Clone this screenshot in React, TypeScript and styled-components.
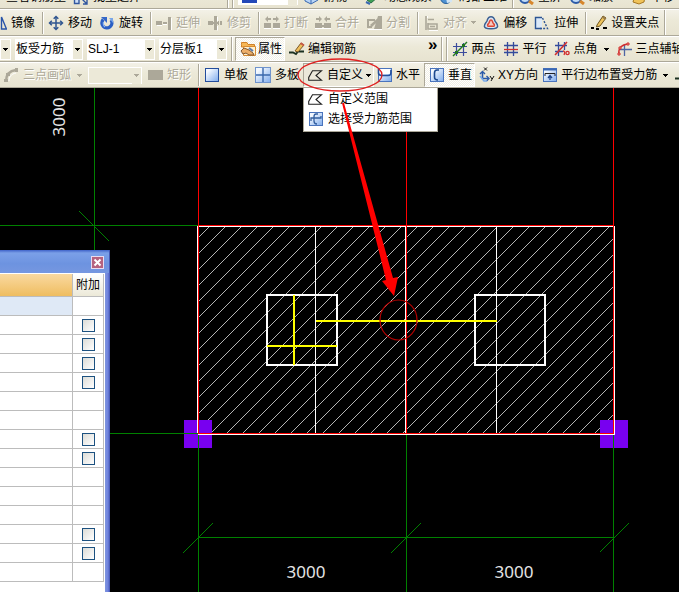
import React from "react";
import styled, { createGlobalStyle, css } from "styled-components";

const GlobalStyle = createGlobalStyle`
  *, *::before, *::after { box-sizing: border-box; }
  body {
    margin: 0;
    background: #000;
    color: #000;
    font-family: "Liberation Sans", "Noto Sans CJK SC", sans-serif;
    font-size: 12px;
    line-height: 16px;
  }
  button, select, input {
    font: inherit;
    color: inherit;
    margin: 0;
  }
`;

const Window = styled.main`
  position: relative;
  display: flex;
  flex-direction: column;
  min-height: 100vh;
  overflow: hidden;
`;

const ToolRow = styled.div<{ $height: number; $start?: number; $clipped?: boolean }>`
  display: flex;
  flex: none;
  align-items: center;
  height: ${(p) => p.$height}px;
  margin-top: ${(p) => (p.$clipped ? -16 : 0)}px;
  padding-left: ${(p) => p.$start ?? 0}px;
  white-space: nowrap;
  background: linear-gradient(#f3f1e7, #ece9d8 40%, #e7e3d0);
  border-top: 1px solid #fff;
  border-bottom: 1px solid #aca899;
  & > * { flex: none; }
`;

const Tool = styled.button<{ $gap?: number; $after?: number; $look?: "pressed" | "open" }>`
  display: flex;
  align-items: center;
  gap: ${(p) => p.$gap ?? 4}px;
  margin-right: ${(p) => p.$after ?? 7}px;
  padding: 0;
  border: 0;
  background: none;
  white-space: nowrap;
  &:disabled {
    color: #aca899;
    text-shadow: 1px 1px 0 #fff;
  }
  ${(p) =>
    p.$look &&
    css`
      height: 24px;
      padding: 0 2px 0 4px;
      border: 1px solid;
      border-color: #aca899 #fff #fff #aca899;
      background: ${p.$look === "pressed"
        ? "repeating-conic-gradient(#fff 0 25%, #f1efe5 0 50%) 0 0 / 2px 2px"
        : "#ebe8da"};
    `}
`;

const Label = styled.span``;

const CaretBox = styled.span<{ $left: number }>`
  display: flex;
  margin-left: ${(p) => p.$left}px;
`;

const MirrorClip = styled.div`
  display: flex;
  justify-content: flex-end;
  width: 42px;
`;

const Sep = styled.span`
  width: 2px;
  height: 22px;
  margin-right: 4px;
  border-left: 1px solid #aca899;
  border-right: 1px solid #fff;
`;

const BarEnd = styled.span<{ $after: number }>`
  width: 2px;
  align-self: stretch;
  margin-right: ${(p) => p.$after}px;
  border-left: 1px solid #aca899;
  border-right: 1px solid #fff;
`;

const Overflow = styled.button`
  margin: 0 3px 8px 72px;
  padding: 0;
  border: 0;
  background: none;
  font-size: 17px;
  line-height: 16px;
  font-weight: bold;
`;

const ComboBox = styled.label<{ $width: number; $height?: number; $after?: number; $off?: boolean }>`
  display: grid;
  grid-template-columns: 1fr 9px;
  align-items: center;
  width: ${(p) => p.$width}px;
  height: ${(p) => p.$height ?? 21}px;
  margin-right: ${(p) => p.$after ?? 4}px;
  background: ${(p) => (p.$off ? "#ece9d8" : "#fff")};
  border: 1px solid #fff;
  & > select {
    grid-area: 1 / 1 / 2 / 3;
    width: 100%;
    height: 100%;
    padding: 0;
    border: 0;
    appearance: none;
    background: none;
  }
`;

const ComboArrow = styled.span<{ $off?: boolean }>`
  grid-area: 1 / 2;
  display: flex;
  align-items: center;
  justify-content: center;
  height: 100%;
  background: #ece9d8;
  color: ${(p) => (p.$off ? "#aca899" : "#000")};
  pointer-events: none;
`;

const Swatch = styled.span`
  grid-area: 1 / 1;
  width: 15px;
  height: 10px;
  margin-left: 3px;
  background: #2348b8;
  pointer-events: none;
`;

const MenuAnchor = styled.div`
  position: relative;
  margin-right: 3px;
`;

const Menu = styled.div`
  position: absolute;
  z-index: 3;
  top: 100%;
  left: 0;
  width: 135px;
  padding: 1px 0 2px;
  background: #fff;
  border: 1px solid #aca899;
`;

const MenuItem = styled.button`
  display: flex;
  align-items: center;
  gap: 4px;
  width: 100%;
  height: 20px;
  padding: 0 4px;
  border: 0;
  background: none;
  white-space: nowrap;
`;

const Canvas = styled.section`
  position: relative;
  flex: 1;
  min-height: 504px;
  background: #000;
`;

const Drawing = styled.svg`
  display: block;
  font-family: "Noto Sans", sans-serif;
  font-size: 17px;
`;

const Annotation = styled.svg`
  position: absolute;
  z-index: 4;
  top: 0;
  left: 0;
  pointer-events: none;
`;

const Panel = styled.aside`
  position: absolute;
  top: 162px;
  left: 0;
  bottom: 0;
  display: flex;
  flex-direction: column;
  width: 110px;
  padding-right: 5px;
  overflow: hidden;
  background: linear-gradient(90deg, #7f98dc calc(100% - 5px), #7a8fe0 calc(100% - 4px), #6f82dc calc(100% - 2px), #3d4fae);
`;

const TitleBar = styled.header`
  display: flex;
  align-items: center;
  justify-content: flex-end;
  flex: none;
  height: 23px;
  margin-right: -5px;
  padding: 1px 5px 0 0;
  background: linear-gradient(#3f62c8, #7ba0e8 3px, #6d93e0 60%, #7697e0);
  border-right: 1px solid #4458b4;
`;

const Close = styled.button`
  display: flex;
  align-items: center;
  justify-content: center;
  width: 13px;
  height: 13px;
  padding: 0;
  border: 1px solid #e8dcf0;
  background: #b5627f;
`;

const PanelBody = styled.div`
  flex: 1;
  background: #fff;
  border-top: 1px solid #fff;
`;

const Grid = styled.table`
  width: 104px;
  border-collapse: separate;
  border-spacing: 0;
  table-layout: fixed;
`;

const Cell = styled.td<{ $tint?: boolean }>`
  height: 19px;
  padding: 0;
  border: solid #bcbcbc;
  border-width: 0 1px 1px 0;
  background: ${(p) => (p.$tint ? "#dfe9f6" : "#fff")};
  text-align: center;
  line-height: 0;
`;

const Head = styled.th<{ $width?: number; $gold?: boolean }>`
  width: ${(p) => (p.$width ? `${p.$width}px` : "auto")};
  height: 23px;
  padding: 0;
  border: solid #bcbcbc;
  border-width: 0 1px 1px 0;
  background: ${(p) => (p.$gold ? "linear-gradient(#fad9a0, #efbd60)" : "linear-gradient(#fff, #ece9d8)")};
  font-weight: normal;
`;

const Check = styled.input`
  appearance: none;
  width: 13px;
  height: 13px;
  border: 1px solid #1c5180;
  background: linear-gradient(135deg, #dcdcd7, #fff);
  vertical-align: middle;
  &:checked { background: #21a121; }
`;

function Caret() {
  return (
    <svg width="5" height="3" viewBox="0 0 5 3" shapeRendering="crispEdges" aria-hidden="true">
      <path d="M0 0H5L2.5 3Z" fill="currentColor" />
    </svg>
  );
}

const tile = <rect x="1.5" y="1.5" width="13" height="13" fill="url(#tileBlue)" stroke="#4a74bd" />;

const icons: Record<string, React.ReactNode> = {
  mirror: (
    <g fill="none" stroke="#2854a8">
      <path d="M1 14L6 2V14Z" fill="#6f9be0" />
      <path d="M8.5 1V15" stroke="#7a93c0" />
      <path d="M10.5 2V14H15.5Z" strokeWidth="1.4" />
    </g>
  ),
  move: (
    <g stroke="#2f5590" strokeWidth="1.5" fill="none">
      <path d="M8 2V14M2 8H14" />
      <path d="M5.7 3.8L8 1.5L10.3 3.8M5.7 12.2L8 14.5L10.3 12.2M3.8 5.7L1.5 8L3.8 10.3M12.2 5.7L14.5 8L12.2 10.3" />
    </g>
  ),
  rotate: (
    <g>
      <path d="M4.2 4.5A5 5 0 1 0 12 5" fill="none" stroke="#2a5fc4" strokeWidth="3.4" />
      <path d="M4.5 7A4.8 4.8 0 0 0 6 12" fill="none" stroke="#8db6f2" strokeWidth="1.2" />
      <path d="M2 2H8V8Z" fill="#3568c8" />
      <path d="M10 3L14 3L14 8Z" fill="#78a5e8" />
    </g>
  ),
  extend: (
    <g fill="#aca899">
      <path d="M0 6H6V10H0ZM7 7H11V9H7ZM12 2H15V15H12Z" />
      <path d="M1 10.5H6M7 9.5H11M15.5 3V15" stroke="#fff" />
    </g>
  ),
  trim: (
    <g fill="#aca899">
      <path d="M1 6H6V10H1ZM6 7H11V9H6ZM7 1H10V15H7ZM11 6H12V10H11ZM13 6H15V10H13Z" />
      <path d="M10.5 2V6M10.5 11V15.5" stroke="#fff" fill="none" />
    </g>
  ),
  breakAt: (
    <g fill="#aca899">
      <path d="M1 4L4 1V3H7V5H4V7ZM15 4L12 1V3H9V5H12V7ZM0 8H7V13H0ZM9 8H16V13H9Z" />
      <path d="M0 13.5H7M9 13.5H16" stroke="#fff" />
    </g>
  ),
  join: (
    <g fill="#aca899">
      <path d="M7 4L4 1V3H1V5H4V7ZM9 4L12 1V3H15V5H12V7ZM0 8H7V13H0ZM9 8H16V13H9ZM7 10H9V12H7Z" />
      <path d="M0 13.5H16" stroke="#fff" />
    </g>
  ),
  split: (
    <g fill="#aca899">
      <path d="M1 4H9V6H3V11H6V13H1ZM8 14L12 1H16V14ZM4 10L13 2L14 4L6 12Z" />
      <path d="M2 14.5H16" stroke="#fff" />
    </g>
  ),
  align: (
    <g fill="none" stroke="#aca899" strokeWidth="1.6">
      <path d="M3 1V15M5 4.5H11M5 8V14H14V9H5M7 11.5H12" />
      <path d="M4.5 1V3M6 15.5H15" stroke="#fff" strokeWidth="1" />
    </g>
  ),
  offset: (
    <g fill="none">
      <path d="M8 1.8C11 1.8 11.4 4 12 6C13 8 15 9 14.6 11.4C14.2 14 11.5 13.8 8 13.8S1.8 14 1.4 11.4C1 9 3 8 4 6C4.6 4 5 1.8 8 1.8Z" fill="#dce7f3" stroke="#3b5f92" strokeWidth="1.5" />
      <path d="M8 5C9.5 5 9.4 7 10.2 8.2C11 9.2 11.8 9.5 11.4 10.6C11 11.6 9.5 11.3 8 11.3S5 11.6 4.6 10.6C4.2 9.5 5 9.2 5.8 8.2C6.6 7 6.5 5 8 5Z" fill="#f7c8c0" stroke="#dc4634" strokeWidth="1.5" />
    </g>
  ),
  stretch: (
    <g fill="none" stroke="#2c5594">
      <path d="M8 2.5H1.5V13.5H8" fill="#dbe9f8" strokeWidth="1.4" />
      <path d="M8.5 3L13.5 13.5H6" strokeDasharray="2 1.5" strokeWidth="1.4" />
    </g>
  ),
  grip: (
    <g>
      <path d="M0 12H3V14H0ZM5 13H8V15H5ZM12 12H16V14H12Z" />
      <path d="M6 10L12 1L15 3L9 11L5.5 12Z" fill="#efc45c" stroke="#6c5420" />
      <path d="M11.5 2L14.5 4" stroke="#9a7d4c" strokeWidth="2" />
    </g>
  ),
  property: (
    <g>
      <path d="M1.5 3.5V1.5H7L8 3.5H14.5V6H1.5Z" fill="#f6b756" stroke="#cf812a" />
      <path d="M3.5 5.5H15.5V14.5H3.5Z" fill="#fff0cf" stroke="#d78b30" />
      <path d="M1 10L4 7L9 9L13 12L14 14H9L6 12L3 13Z" fill="#edae68" stroke="#80572e" />
      <path d="M9 7L13 10" stroke="#5d7dad" strokeWidth="2" />
    </g>
  ),
  editBar: (
    <g fill="none">
      <path d="M0 11.5H4L7 13L9 10.5H15" stroke="#1b3021" strokeWidth="1.8" />
      <path d="M6 10L12 2L15 4L9 11Z" fill="#f0c05c" stroke="#7a5727" />
      <path d="M11.5 2L15 4.5" stroke="#c85b48" strokeWidth="2" />
    </g>
  ),
  twoPoint: (
    <g fill="none">
      <path d="M4.5 2V15M11.5 2V15M1 5.5H15M1 11.5H15" stroke="#3b4b9c" strokeWidth="1.2" />
      <path d="M1 15L15 1" stroke="#247a24" strokeWidth="1.4" />
      <path d="M3 10H6V13H3ZM10 3H13V6H10Z" fill="#207420" />
    </g>
  ),
  parallel: (
    <g fill="none" strokeWidth="1.3">
      <path d="M4.5 1V15M10.5 1V15" stroke="#344b9c" />
      <path d="M1 4.5H15M1 11.5H15" stroke="#344b9c" />
      <path d="M1 8.5H15" stroke="#d22e2e" />
    </g>
  ),
  pointAngle: (
    <g fill="none">
      <path d="M4.5 1V15M10.5 1V9M1 4.5H13M1 10.5H9" stroke="#344b9c" strokeWidth="1.3" />
      <path d="M1 14L13 1" stroke="#d22e2e" strokeWidth="1.5" />
      <path d="M9 10C11 10 11 12 10 14" stroke="#d22e2e" strokeWidth="1.3" />
      <circle cx="13.5" cy="12" r="1.6" stroke="#d22e2e" strokeWidth="1.4" />
    </g>
  ),
  threeAxis: (
    <g fill="none">
      <path d="M8.5 3V15M4 8.5H16" stroke="#4d65a4" strokeWidth="1.3" />
      <path d="M3 13C2 7 6 3 13 3" stroke="#d22e2e" strokeWidth="1.5" />
      <path d="M2 12H4V14H2ZM3 6H5V8H3ZM11 2H13V4H11Z" fill="#f4b5a8" stroke="#d22e2e" />
    </g>
  ),
  arc: (
    <g fill="none" stroke="#aca899">
      <path d="M3 14C3 8 6 4 13 3" strokeWidth="2.4" />
      <path d="M1 12H5V15H1ZM3 6H7V9H3ZM12 1H15V5H12Z" fill="#aca899" stroke="none" />
      <path d="M6 14C6 10 8 7 13 6" stroke="#fff" />
    </g>
  ),
  rect: <path d="M0 3H15V13H0Z" fill="#aca899" />,
  single: <rect x="1.5" y="1.5" width="13" height="13" fill="url(#tileBlue)" stroke="#234d9c" />,
  multi: (
    <g>
      <rect x="0.5" y="0.5" width="15" height="15" fill="url(#tileBlue)" stroke="#6f93cc" />
      <path d="M8 1V15M1 8H15" stroke="#3a68ac" strokeWidth="1.4" />
    </g>
  ),
  polygon: <path d="M0.7 13.3V10.5L4.5 3.7H13.5L8 8.5L13.5 13.3Z" fill="none" stroke="#202020" strokeWidth="1.1" />,
  horizontal: (
    <g fill="none">
      {tile}
      <path d="M2 2H13V7H2Z" fill="#fff" />
      <path d="M1.5 2V6C1.500 8.5 3 8.5 5 8.500H11C13.5 8.500 14 8 14 3" stroke="#25509c" strokeWidth="1.6" />
    </g>
  ),
  vertical: (
    <g fill="none">
      {tile}
      <path d="M10 3H8C6 3 5.5 4 5.5 6V10C5.5 12 6 13 9 13" stroke="#1b488e" strokeWidth="1.6" />
    </g>
  ),
  xy: (
    <g fill="none">
      <path d="M3.5 5V11.5H9" stroke="#2858a8" strokeWidth="1.6" />
      <path d="M1 7L3.5 4.5L6 7M7.5 9L10 11.5L7.5 14" stroke="#2858a8" strokeWidth="1.4" />
      <path d="M5 0.5L8 3.5M8 0.5L5 3.5M11 9L13 12M15 9L12 14" stroke="#111" />
      <path d="M1 9L5 14L8 14" stroke="#78a9e8" strokeWidth="1.6" />
    </g>
  ),
  edges: (
    <g fill="none">
      {tile}
      <path d="M1 2.5H15" stroke="#3a68b4" strokeWidth="2" />
      <path d="M3 9V6.500H13V9" stroke="#222" />
      <path d="M8 13V9M6 11L8 8.5L10 11" stroke="#1d438a" strokeWidth="1.3" />
    </g>
  ),
  pick: (
    <g fill="none">
      {tile}
      <path d="M10 3H8C6.5 3 6 4 6 6V10C6 12 7 13 9 13M3 10V7H13V5" stroke="#335f9f" strokeWidth="1.3" />
    </g>
  ),
  batch: (
    <g fill="none" stroke="#3157a0" strokeWidth="1.4">
      <path d="M1.5 2V14.5H6V2ZM8 2H14V8H8" fill="#cfe0f8" />
      <path d="M9 10L14 15M14 11V15H10" />
    </g>
  ),
  cube: (
    <g stroke="#3868b0">
      <path d="M2 5L9 2L15 5V11L8 15L2 12Z" fill="#b9d5f7" />
      <path d="M2 5L8 8L15 5M8 8V15" fill="none" />
    </g>
  ),
  orbit: (
    <g>
      <path d="M3 11L12 5L14 8L7 14Z" fill="#3ea055" stroke="#276c42" />
      <path d="M2 13L6 15" stroke="#3868b0" strokeWidth="2" />
    </g>
  ),
  globe: (
    <g>
      <circle cx="7" cy="9" r="5.5" fill="#4e91d2" stroke="#28609c" />
      <path d="M7 9L13 7V13L8 14Z" fill="#d2e5f5" />
    </g>
  ),
  lens: (
    <g fill="none">
      <circle cx="7" cy="9" r="5" fill="#c2dcf8" stroke="#2b5aa8" strokeWidth="1.8" />
      <path d="M11 12L15 15" stroke="#d7862c" strokeWidth="3" />
    </g>
  ),
  hand: <path d="M2 13L4 6L8 8L12 4L14 7L13 13L8 15Z" fill="#f0c35a" stroke="#a77722" />,
};

function Icon({ name }: { name: string }) {
  return (
    <svg width="16" height="16" viewBox="0 0 16 16" aria-hidden="true">
      {icons[name]}
    </svg>
  );
}

interface ToolButtonProps {
  icon: string;
  text: string;
  off?: boolean;
  gap?: number;
  after?: number;
  look?: "pressed" | "open";
  caret?: number;
}

function ToolButton({ icon, text, off, gap, after, look, caret }: ToolButtonProps) {
  return (
    <Tool type="button" disabled={off} $gap={gap} $after={after} $look={look}>
      <Icon name={icon} />
      <Label>{text}</Label>
      {caret !== undefined && (
        <CaretBox $left={caret}>
          <Caret />
        </CaretBox>
      )}
    </Tool>
  );
}

interface ComboProps {
  label: string;
  value?: string;
  width: number;
  height?: number;
  after?: number;
  off?: boolean;
  swatch?: boolean;
}

function Combo({ label, value, width, height, after, off, swatch }: ComboProps) {
  return (
    <ComboBox $width={width} $height={height} $after={after} $off={off}>
      <select aria-label={label} disabled={off}>
        <option>{value ?? ""}</option>
      </select>
      {swatch && <Swatch />}
      <ComboArrow $off={off}>
        <Caret />
      </ComboArrow>
    </ComboBox>
  );
}

const hatchSums = Array.from({ length: 39 }, (_, i) => 436 + i * 16);
const rowHasCheck = [false, true, true, true, true, false, false, true, true, false, false, false, true, true, false];

function PlanDrawing() {
  return (
    <Drawing width="679" height="504" viewBox="0 88 679 504" role="img" aria-label="板受力筋平面图">
      <defs>
        <clipPath id="slab">
          <rect x="199" y="227" width="414" height="206" />
        </clipPath>
      </defs>
      <g shapeRendering="crispEdges" fill="none">
        <g clipPath="url(#slab)" stroke="#b4b4b4">
          {hatchSums.map((s) => (
            <path key={s} d={`M${s - 434} 434L${s - 226} 226`} />
          ))}
        </g>
        <g fill="#7800f0">
          <rect x="184" y="420" width="28" height="28" />
          <rect x="600" y="420" width="28" height="28" />
        </g>
        <g stroke="#008000">
          <path d="M94.5 88V250M0 225.5H198M0 433.5H198M198.5 434V592M406.5 434V592M613.5 434V592M198 537.5H613" />
          <path d="M79 211L109 241M183 553L213 523M391 553L421 523M600 552L629 523" />
        </g>
        <path d="M197.5 226V433M198 226.5H615M198 434.5H615M405.5 226V433M614.5 226V434M315.5 226V433M496.5 226V433" stroke="#fff" />
        <path d="M198.5 88V434M406.5 88V434M613.5 88V434M198 225.5H614M198 433.5H614" stroke="#f00" />
        <g stroke="#fff" strokeWidth="2">
          <rect x="267" y="295" width="70" height="70" />
          <rect x="475" y="295" width="70" height="70" />
        </g>
        <path d="M294 295V365M267 346H337M316 321H497" stroke="#ff0" strokeWidth="2" />
      </g>
      <g fill="#e4e4e4" textAnchor="middle">
        <text x="306" y="578">3000</text>
        <text x="514" y="578">3000</text>
        <text transform="translate(65 117) rotate(-90)">3000</text>
      </g>
    </Drawing>
  );
}

function AddonPanel() {
  return (
    <Panel>
      <TitleBar>
        <Close type="button" aria-label="关闭">
          <svg width="9" height="9" viewBox="0 0 9 9" aria-hidden="true">
            <path d="M1.5 1.5L7.5 7.5M7.5 1.5L1.5 7.5" stroke="#fff" strokeWidth="2" />
          </svg>
        </Close>
      </TitleBar>
      <PanelBody>
        <Grid>
          <thead>
            <tr>
              <Head $gold aria-label="属性值" />
              <Head $width={31}>附加</Head>
            </tr>
          </thead>
          <tbody>
            {rowHasCheck.map((has, i) => (
              <tr key={i}>
                <Cell $tint={i === 0} />
                <Cell>{has && <Check type="checkbox" aria-label="附加" />}</Cell>
              </tr>
            ))}
          </tbody>
        </Grid>
      </PanelBody>
    </Panel>
  );
}

export default function App() {
  return (
    <Window>
      <GlobalStyle />
      <ToolRow $height={25} $start={6} $clipped>
        <Tool type="button"><Label>查看钢筋量</Label></Tool>
        <ToolButton icon="batch" text="批量选择" after={86} />
        <BarEnd $after={3} />
        <BarEnd $after={4} />
        <Combo label="楼层" width={60} height={16} after={5} swatch />
        <ToolButton icon="cube" text="俯视" after={17} />
        <ToolButton icon="orbit" text="动态观察" />
        <ToolButton icon="globe" text="局部三维" after={5} />
        <Sep />
        <ToolButton icon="lens" text="全屏" />
        <ToolButton icon="lens" text="缩放" after={18} />
        <ToolButton icon="hand" text="平移" />
      </ToolRow>
      <ToolRow $height={27}>
        <MirrorClip>
          <ToolButton icon="mirror" text="镜像" />
        </MirrorClip>
        <Sep />
        <ToolButton icon="move" text="移动" />
        <ToolButton icon="rotate" text="旋转" />
        <Sep />
        <ToolButton icon="extend" text="延伸" off />
        <ToolButton icon="trim" text="修剪" off />
        <Sep />
        <ToolButton icon="breakAt" text="打断" off />
        <ToolButton icon="join" text="合并" off />
        <ToolButton icon="split" text="分割" off />
        <Sep />
        <ToolButton icon="align" text="对齐" off caret={0} />
        <ToolButton icon="offset" text="偏移" />
        <ToolButton icon="stretch" text="拉伸" />
        <Sep />
        <ToolButton icon="grip" text="设置夹点" after={5} />
        <BarEnd $after={0} />
      </ToolRow>
      <ToolRow $height={26}>
        <Combo label="类别" width={11} />
        <Combo label="构件类型" value="板受力筋" width={68} />
        <Combo label="构件" value="SLJ-1" width={68} />
        <Combo label="分层" value="分层板1" width={68} />
        <BarEnd $after={2} />
        <ToolButton icon="property" text="属性" look="pressed" gap={2} after={4} />
        <ToolButton icon="editBar" text="编辑钢筋" gap={3} after={0} />
        <Overflow type="button" aria-label="更多">»</Overflow>
        <BarEnd $after={3} />
        <BarEnd $after={4} />
        <ToolButton icon="twoPoint" text="两点" />
        <ToolButton icon="parallel" text="平行" />
        <ToolButton icon="pointAngle" text="点角" caret={2} />
        <ToolButton icon="threeAxis" text="三点辅轴" />
      </ToolRow>
      <ToolRow $height={26} $start={3}>
        <ToolButton icon="arc" text="三点画弧" off caret={2} after={6} />
        <Combo label="画法" width={54} height={17} after={6} off />
        <ToolButton icon="rect" text="矩形" off gap={3} />
        <Sep />
        <ToolButton icon="single" text="单板" />
        <ToolButton icon="multi" text="多板" after={4} />
        <MenuAnchor>
          <ToolButton icon="polygon" text="自定义" look="open" gap={3} caret={0} after={0} />
          <Menu>
            <MenuItem type="button"><Icon name="polygon" /><Label>自定义范围</Label></MenuItem>
            <MenuItem type="button"><Icon name="pick" /><Label>选择受力筋范围</Label></MenuItem>
          </Menu>
        </MenuAnchor>
        <ToolButton icon="horizontal" text="水平" gap={3} after={4} />
        <ToolButton icon="vertical" text="垂直" look="pressed" gap={3} after={4} />
        <ToolButton icon="xy" text="XY方向" gap={3} after={4} />
        <ToolButton icon="edges" text="平行边布置受力筋" gap={3} caret={3} />
        <ToolButton icon="editBar" text="编辑" />
      </ToolRow>
      <Canvas>
        <PlanDrawing />
        <AddonPanel />
      </Canvas>
      <Annotation width="679" height="592" viewBox="0 0 679 592" aria-hidden="true">
        <defs>
          <linearGradient id="tileBlue" x1="0" y1="0" x2="1" y2="1">
            <stop offset="0.2" stopColor="#f4f9ff" />
            <stop offset="1" stopColor="#7eabec" />
          </linearGradient>
        </defs>
        <ellipse cx="340" cy="75" rx="42" ry="16" fill="none" stroke="#e02020" strokeWidth="1.3" />
        <path d="M342 103L344 103L393 278L398 277L394 296L382 281L386 280Z" fill="#f00" />
        <ellipse cx="398.5" cy="320" rx="18.5" ry="20" fill="none" stroke="#b40000" strokeWidth="1.2" />
      </Annotation>
    </Window>
  );
}
